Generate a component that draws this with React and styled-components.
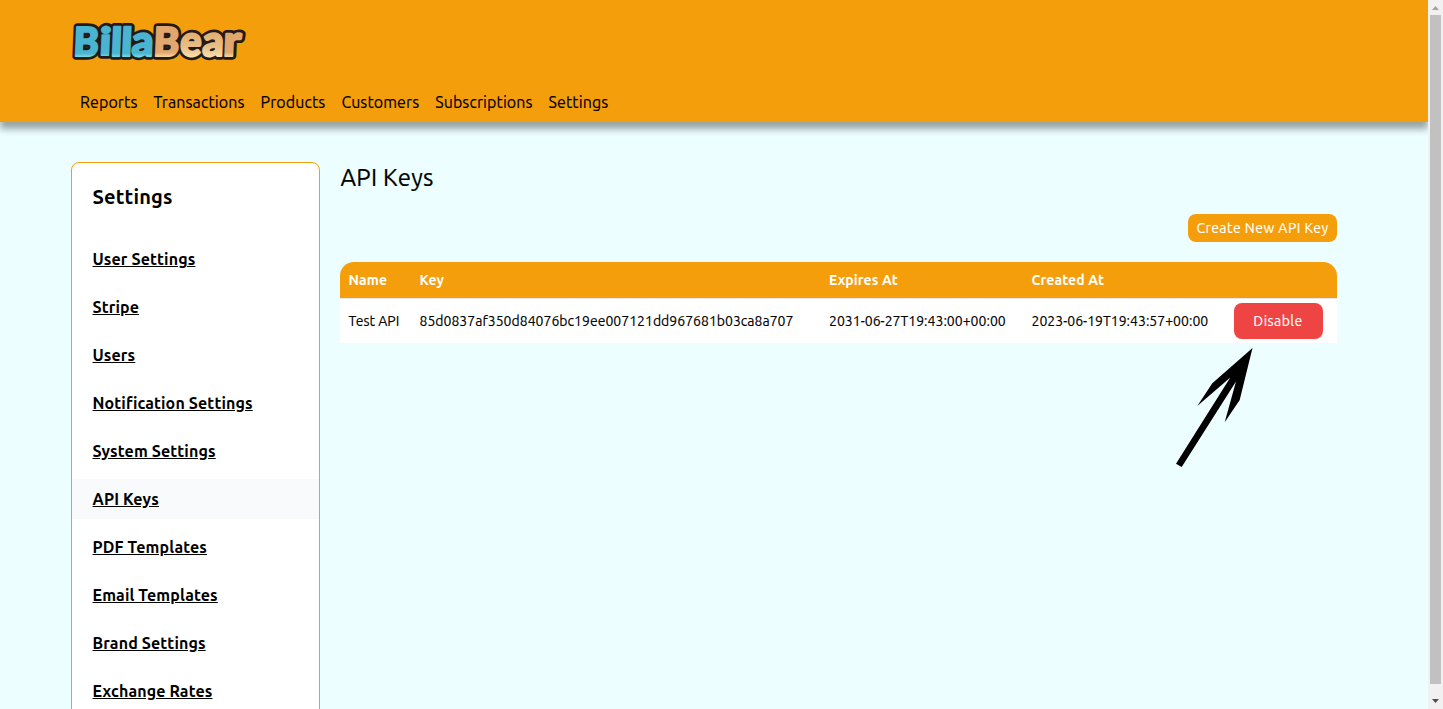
import React from "react";
import styled, { createGlobalStyle } from "styled-components";

const Global = createGlobalStyle`
  * { box-sizing: border-box; }
  html, body { margin: 0; padding: 0; overflow: hidden; }
  body { font-family: Ubuntu, "Noto Sans", sans-serif; font-size: 16px; line-height: 24px; color: #000; }
`;

const Screen = styled.div`
  display: flex;
  width: 1443px;
  height: 709px;
  overflow: hidden;
  position: relative;
`;

const Page = styled.div`
  flex: 1;
  min-width: 0;
  display: flex;
  flex-direction: column;
  background: #ecfeff;
  overflow: hidden;
`;

const Header = styled.header`
  flex: none;
  height: 122px;
  padding: 18px 71px 0 72px;
  background: #f59e0b;
  box-shadow: 0 7px 7px rgba(0, 0, 0, 0.36);
`;

const Logo = styled.svg`
  display: block;
  margin-left: -2px;
  overflow: visible;
`;

const Nav = styled.nav`
  display: flex;
  margin-top: 24px;
`;

const NavLink = styled.a`
  padding: 0 8px;
  letter-spacing: 0.09px;
  -webkit-text-stroke: 0.15px currentColor;
  white-space: nowrap;
`;

const Body = styled.div`
  display: flex;
  align-items: flex-start;
  gap: 20px;
  padding: 40px 91px 0 71px;
`;

const Sidebar = styled.aside`
  flex: none;
  width: 249px;
  height: 640px;
  padding-top: 20px;
  background: #fff;
  border: 1px solid #f59e0b;
  border-radius: 8px;
`;

const SidebarTitle = styled.h2`
  margin: 0 0 28px;
  padding-left: 20.5px;
  font-size: 20px;
  line-height: 28px;
  font-weight: 700;
  letter-spacing: 0.2px;
`;

const Menu = styled.ul`
  list-style: none;
  margin: 0;
  padding: 0;
  display: flex;
  flex-direction: column;
  gap: 8px;
`;

const MenuItem = styled.li`
  height: 40px;
  padding: 8px 0 0 20.5px;
  background: ${(p) => (p.$active ? "#f9fafb" : "transparent")};
`;

const MenuLink = styled.a`
  font-weight: 700;
  letter-spacing: 0.13px;
  text-decoration: underline;
`;

const Main = styled.main`
  flex: 1;
  min-width: 0;
  display: flex;
  flex-direction: column;
`;

const Title = styled.h1`
  margin: 0 0 0 0.5px;
  font-size: 24px;
  line-height: 32px;
  font-weight: 400;
  letter-spacing: 0.25px;
  -webkit-text-stroke: 0.2px currentColor;
`;

const Actions = styled.div`
  display: flex;
  justify-content: flex-end;
  margin: 20px 0;
`;

const Button = styled.button`
  width: ${(p) => p.$w}px;
  height: ${(p) => p.$h}px;
  padding: 0;
  border: 0;
  border-radius: 8px;
  background: ${(p) => p.$bg};
  color: #fff;
  font: 400 14px/20px Ubuntu, "Noto Sans", sans-serif;
  letter-spacing: 0.45px;
  -webkit-text-stroke: 0.15px currentColor;
  white-space: nowrap;
`;

const Table = styled.div`
  border-radius: 14px 14px 0 0;
  overflow: hidden;
  font-size: 14px;
  line-height: 20px;
`;

const Row = styled.div`
  display: grid;
  grid-template-columns: 71px 409.5px 202.5px 202px 1fr;
  align-items: center;
  height: ${(p) => (p.$head ? 37 : 44)}px;
  background: ${(p) => (p.$head ? "#f59e0b" : "#fff")};
  color: ${(p) => (p.$head ? "#fff" : "#000")};
  font-weight: ${(p) => (p.$head ? 700 : 400)};
  letter-spacing: ${(p) => (p.$head ? 0.1 : 0.02)}px;
  -webkit-text-stroke: ${(p) => (p.$head ? 0 : 0.15)}px currentColor;
  border-bottom: ${(p) => (p.$head ? "1px solid #e5e7eb" : "0")};
`;

const Cell = styled.div`
  padding-left: 8.5px;
  white-space: nowrap;
`;

const Scrollbar = styled.div`
  flex: none;
  width: 15px;
  display: flex;
  flex-direction: column;
  align-items: center;
  background: #f1f1f1;
`;

const Thumb = styled.div`
  width: 11px;
  height: 669px;
  background: #c1c1c1;
`;

const Arrow = styled.svg`
  position: absolute;
  left: 1160px;
  top: 340px;
`;

const NAV = ["Reports", "Transactions", "Products", "Customers", "Subscriptions", "Settings"];

const MENU = [
  "User Settings", "Stripe", "Users", "Notification Settings", "System Settings",
  "API Keys", "PDF Templates", "Email Templates", "Brand Settings", "Exchange Rates",
];

const LETTERS = [
  ["B", 3.6, 25.5, "url(#blue)", 40], ["i", 30.2, 11.5, "url(#blue)", 38], ["l", 41.6, 11, "url(#blue)", 39],
  ["l", 52, 11, "url(#blue)", 39], ["a", 62.5, 22, "url(#blue)", 43], ["B", 84.5, 26, "url(#tan)", 40],
  ["e", 111.5, 21.5, "url(#sand)", 43], ["a", 134, 21.5, "url(#sand)", 43], ["r", 155, 18, "url(#tan)", 43],
];

function BrandLogo() {
  const glyph = ([ch, x, w, fill, size], i, back) => (
    <text key={i + (back ? "b" : "f")} x={x} y={37.5} fontSize={size} textLength={w} lengthAdjust="spacingAndGlyphs"
      fill={back ? "#231916" : fill} stroke={back ? "#231916" : fill} strokeWidth={back ? 7.6 : 2.2} strokeLinejoin="round">
      {ch}
    </text>
  );
  return (
    <Logo width="180" height="48" viewBox="0 0 180 48" fontFamily="Lato, sans-serif" fontWeight="900">
      <defs>
        <linearGradient id="blue" gradientUnits="userSpaceOnUse" x1="0" y1="8" x2="0" y2="39">
          <stop offset="0" stopColor="#4bb4d0" /><stop offset=".88" stopColor="#49b5d1" /><stop offset="1" stopColor="#79dce5" />
        </linearGradient>
        <linearGradient id="tan" gradientUnits="userSpaceOnUse" x1="0" y1="8" x2="0" y2="39">
          <stop offset="0" stopColor="#e1a56e" /><stop offset=".85" stopColor="#e2a76f" /><stop offset="1" stopColor="#f6d9a5" />
        </linearGradient>
        <linearGradient id="sand" gradientUnits="userSpaceOnUse" x1="0" y1="14" x2="0" y2="39">
          <stop offset="0" stopColor="#e3ac72" /><stop offset=".6" stopColor="#e8bf84" /><stop offset="1" stopColor="#f8dfae" />
        </linearGradient>
      </defs>
      <g transform="translate(1 0) scale(.99 1) skewX(-2.5)">
        {LETTERS.map((l, i) => glyph(l, i, true))}
        {LETTERS.map((l, i) => glyph(l, i, false))}
      </g>
    </Logo>
  );
}

export default function App() {
  return (
    <Screen>
      <Global />
      <Page>
        <Header>
          <BrandLogo />
          <Nav>
            {NAV.map((t) => <NavLink key={t}>{t}</NavLink>)}
          </Nav>
        </Header>
        <Body>
          <Sidebar>
            <SidebarTitle>Settings</SidebarTitle>
            <Menu>
              {MENU.map((t) => (
                <MenuItem key={t} $active={t === "API Keys"}><MenuLink>{t}</MenuLink></MenuItem>
              ))}
            </Menu>
          </Sidebar>
          <Main>
            <Title>API Keys</Title>
            <Actions>
              <Button $w={149} $h={28} $bg="#f59e0b">Create New API Key</Button>
            </Actions>
            <Table>
              <Row $head>
                <Cell>Name</Cell><Cell>Key</Cell><Cell>Expires At</Cell><Cell>Created At</Cell><Cell />
              </Row>
              <Row>
                <Cell>Test API</Cell>
                <Cell>85d0837af350d84076bc19ee007121dd967681b03ca8a707</Cell>
                <Cell>2031-06-27T19:43:00+00:00</Cell>
                <Cell>2023-06-19T19:43:57+00:00</Cell>
                <Cell><Button $w={89} $h={36} $bg="#ef4444">Disable</Button></Cell>
              </Row>
            </Table>
          </Main>
        </Body>
      </Page>
      <Scrollbar>
        <svg width="15" height="15"><path d="M4 10 L7.5 6 L11 10Z" fill="#a3a3a3" /></svg>
        <Thumb />
        <svg width="15" height="25"><path d="M4 15 L11 15 L7.5 19Z" fill="#505050" /></svg>
      </Scrollbar>
      <Arrow width="110" height="135" viewBox="0 0 110 135">
        <path d="M92.5 8 L52.3 43.3 L37.3 66 L70.3 37.5 L16 123.7 L21.7 127 L76 41.5 L64.7 82.3 L79.7 60Z" />
      </Arrow>
    </Screen>
  );
}
